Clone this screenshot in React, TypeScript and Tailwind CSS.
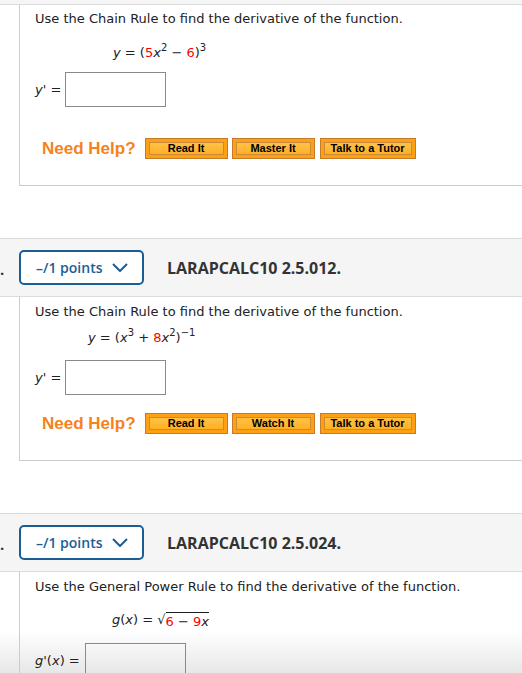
import React from "react";

const body = { fontFamily: '"DejaVu Sans", Verdana, sans-serif' };
const arial = { fontFamily: '"Liberation Sans", Arial, sans-serif' };
const open = { fontFamily: '"Open Sans", sans-serif' };

function HelpButton({ label, w }: { label: string; w: string }) {
  return (
    <div className={`${w} h-[21px] border border-[#c47c2a] bg-[#ff9f12] px-[3px] py-[3px] flex`}>
      <div
        className="flex-1 border border-[#c98a3a] bg-linear-to-b from-[#ffc247] to-[#ffb020] flex items-center justify-center text-[11px] leading-[11px] font-bold text-black"
        style={arial}
      >
        {label}
      </div>
    </div>
  );
}

function NeedHelp({ second }: { second: string }) {
  return (
    <div className="flex items-center h-[21px] pl-[7px]">
      <span className="text-[17px] font-bold text-[#f58220] mr-[9px]" style={arial}>
        Need Help?
      </span>
      <div className="flex gap-[4px]">
        <HelpButton label="Read It" w="w-[83px]" />
        <HelpButton label={second} w="w-[83px]" />
        <div className="ml-[1px]">
          <HelpButton label="Talk to a Tutor" w="w-[96px]" />
        </div>
      </div>
    </div>
  );
}

function Header({ code }: { code: string }) {
  return (
    <div className="border-y border-[#dcdcdc] bg-[#f5f5f5] h-[59px] flex items-center relative">
      <span className="absolute left-0 top-[19px] text-[15px] font-bold text-[#333]" style={open}>
        .
      </span>
      <div
        className="ml-[19px] w-[125px] h-[35px] border-2 border-[#1b5e96] rounded-[5px] bg-white flex items-center pl-[15px]"
        style={open}
      >
        <span className="text-[14px] font-semibold text-[#1b5e96]">–/1 points</span>
        <svg width="16" height="9" viewBox="0 0 16 9" className="ml-[9px]">
          <polyline points="1,1 8,8 15,1" fill="none" stroke="#1b5e96" strokeWidth="2" />
        </svg>
      </div>
      <span className="ml-[23px] text-[16px] font-bold text-[#333]" style={open}>
        {code}
      </span>
    </div>
  );
}

function AnswerBox({ w = "w-[101px]" }: { w?: string }) {
  return <div className={`${w} h-[35px] border border-[#8a8a8a]`} />;
}

const Red = ({ children }: { children: React.ReactNode }) => (
  <span className="text-[#ff0000]">{children}</span>
);
const Sup = ({ children }: { children: React.ReactNode }) => (
  <span className="text-[10px] leading-none relative top-[-6px] align-baseline">{children}</span>
);

export default function App() {
  return (
    <div className="w-[522px] h-[673px] overflow-hidden bg-white relative text-[13px] text-[#222]" style={body}>
      <div className="absolute left-0 right-0 bottom-0 h-[42px] bg-linear-to-b from-[rgba(230,230,230,0)] to-[rgba(225,225,225,0.8)]" />

      <div className="relative">
        <div className="h-[5px] bg-[#f5f5f5] border-b border-[#dcdcdc]" />

        {/* Card 1 */}
        <div className="ml-[19px] border-l border-b border-[#cccccc] pl-[15px] pt-[6px] pb-[26px] bg-white">
          <div className="leading-[16px]">Use the Chain Rule to find the derivative of the function.</div>
          <div className="h-[20px] leading-[20px] mt-[16px] ml-[78px] whitespace-pre">
            <i>y</i> = (<Red>5</Red><i>x</i><Sup>2</Sup> − <Red>6</Red>)<Sup>3</Sup>
          </div>
          <div className="flex items-center mt-[9px]">
            <span className="w-[30px] whitespace-pre"><i>y</i>' =</span>
            <AnswerBox />
          </div>
          <div className="mt-[31px]">
            <NeedHelp second="Master It" />
          </div>
        </div>

        <div className="mt-[52px]">
          <Header code="LARAPCALC10 2.5.012." />
        </div>

        {/* Card 2 */}
        <div className="ml-[19px] border-l border-b border-[#cccccc] pl-[15px] pt-[7px] pb-[26px] bg-white">
          <div className="leading-[16px]">Use the Chain Rule to find the derivative of the function.</div>
          <div className="h-[20px] leading-[20px] mt-[8px] ml-[53px] whitespace-pre">
            <i>y</i> = (<i>x</i><Sup>3</Sup> + <Red>8</Red><i>x</i><Sup>2</Sup>)<Sup>−1</Sup>
          </div>
          <div className="flex items-center mt-[12px]">
            <span className="w-[30px] whitespace-pre"><i>y</i>' =</span>
            <AnswerBox />
          </div>
          <div className="mt-[18px]">
            <NeedHelp second="Watch It" />
          </div>
        </div>

        <div className="mt-[52px]">
          <Header code="LARAPCALC10 2.5.024." />
        </div>

        {/* Card 3 */}
        <div className="ml-[19px] border-l border-[#cccccc] pl-[15px] pt-[7px] pb-[40px]">
          <div className="leading-[16px]">Use the General Power Rule to find the derivative of the function.</div>
          <div className="h-[20px] leading-[20px] mt-[15px] ml-[77px] whitespace-pre flex items-end">
            <span>
              <i>g</i>(<i>x</i>) = √
            </span>
            <span className="border-t border-[#222] leading-[17px]">
              <Red>6</Red> − <Red>9</Red><i>x</i>
            </span>
          </div>
          <div className="flex items-center mt-[13px]">
            <span className="w-[50px] whitespace-pre"><i>g</i>'(<i>x</i>) =</span>
            <AnswerBox />
          </div>
        </div>
      </div>
    </div>
  );
}
